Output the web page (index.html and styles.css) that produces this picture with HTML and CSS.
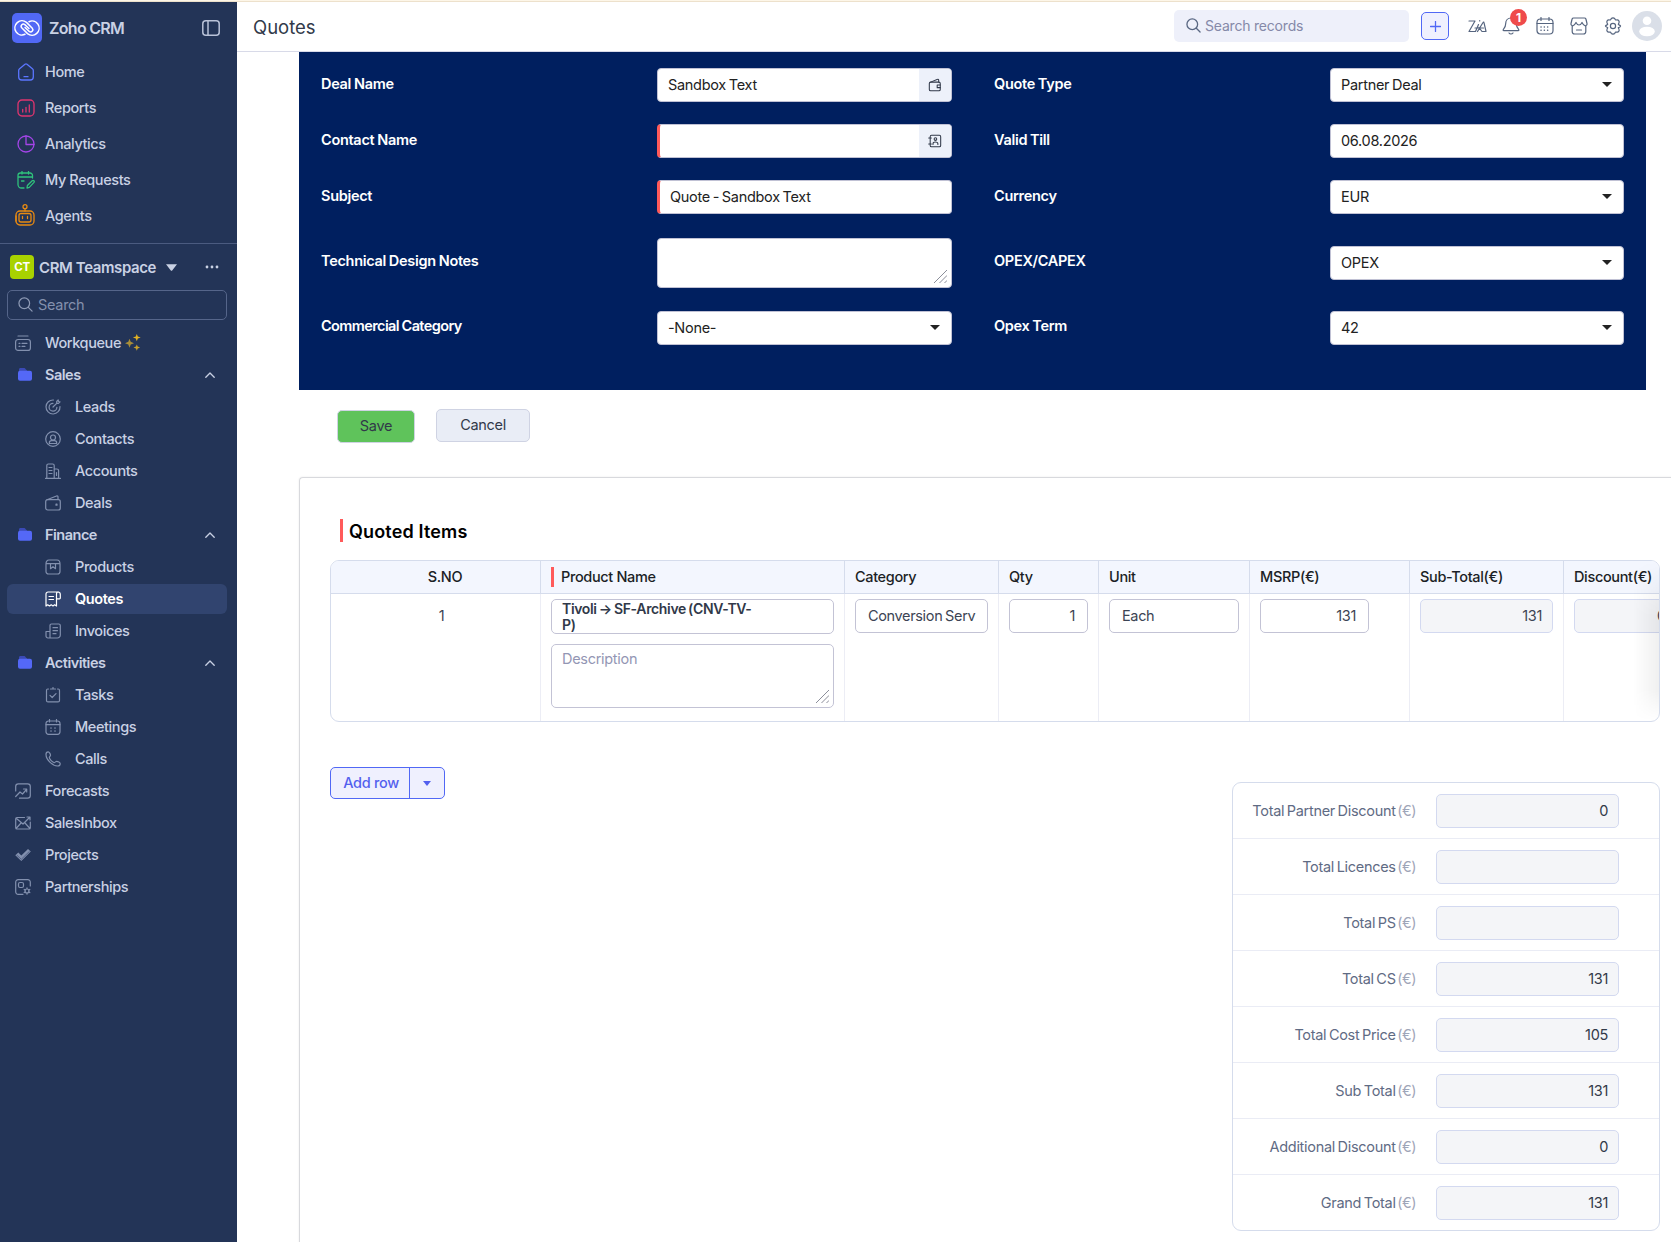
FILE: index.html
```html
<!DOCTYPE html>
<html lang="en">

<head>
    <meta charset="UTF-8">
    <meta name="viewport" content="width=device-width, initial-scale=1.0">
    <title>Quotes - Zoho CRM</title>
    <link rel="stylesheet" href="styles.css">
</head>

<body>
<div class="strip"></div>
<div class="app">
    <nav class="sidebar">
        <div class="brand">
            <svg class="logo" viewBox="0 0 30 30"><rect width="30" height="30" rx="5" fill="#5168f5"/><g fill="none" stroke="#fff" stroke-width="1.5" stroke-linecap="round"><path d="M13 21.300A7.100 7.100 0 1 1 14.500 9.400L20.300 15.300A2.200 2.200 0 0 1 17.200 18.400L13 14.500"/><path d="M17 8.700A7.100 7.100 0 1 1 15.500 20.600L9.700 14.700A2.200 2.200 0 0 1 12.800 11.600L17 15.500"/></g></svg>
            <span class="brand-name">Zoho CRM</span>
            <svg class="collapse" viewBox="0 0 18 16"><rect x=".8" y=".8" width="16.4" height="14.4" rx="3"/><path d="M6 1v14"/></svg>
        </div>
        <ul class="main-menu">
            <li><svg class="ic" viewBox="0 0 18 18" stroke="#5b76ff"><path d="M1.700 7.500c0-.8.3-1.300.9-1.800L8 1.300c.7-.5 1.300-.5 2 0l5.400 4.400c.6.5.9 1 .9 1.800V14a3 3 0 0 1-3 3H4.700a3 3 0 0 1-3-3zM7 13.700h4"/></svg>Home</li>
            <li><svg class="ic" viewBox="0 0 18 18" stroke="#e0356f"><rect x="1" y="1" width="16" height="16" rx="4"/><path d="M5.700 10.500v2.500M9 8.500V13M12.300 6v7"/></svg>Reports</li>
            <li><svg class="ic" viewBox="0 0 18 18" stroke="#a445e8"><circle cx="9" cy="9" r="8"/><path d="M9 1v8.500h8"/></svg>Analytics</li>
            <li><svg class="ic" viewBox="0 0 18 18" stroke="#2fc27c"><path d="M7 17H4.500A3.500 3.500 0 0 1 1 13.500V4.500A2.500 2.500 0 0 1 3.500 2H13a2.500 2.500 0 0 1 2.500 2.500V7M1 6h14.500M5 .5V3M11.500.5V3M4.500 10h2.500M10 17l.4-2.500 4.800-4.800c1.200-1 2.700.5 1.800 1.700l-4.700 5z"/></svg>My Requests</li>
            <li><svg class="ic ic-agent" viewBox="0 0 20 22" stroke="#e88a12"><circle cx="10" cy="2.700" r="2"/><path d="M10 4.700V7"/><rect x="1" y="7" width="18" height="14" rx="4"/><rect x="4" y="9.500" width="12" height="8.500" rx="2"/><path d="M1 12v5M7.500 12.500v2M12.500 12.500v2"/></svg>Agents</li>
        </ul>
        <div class="teamspace">
            <span class="team-badge">CT</span>
            <span class="team-name">CRM Teamspace</span>
            <svg class="team-caret" viewBox="0 0 10 6"><path d="M0 0h10L5.800 5.400a1 1 0 0 1-1.600 0z"/></svg>
            <svg class="dots" viewBox="0 0 14 4"><circle cx="2" cy="2" r="1.400"/><circle cx="7" cy="2" r="1.400"/><circle cx="12" cy="2" r="1.400"/></svg>
        </div>
        <div class="side-search">
            <svg viewBox="0 0 16 16"><circle cx="6.700" cy="6.700" r="5.700"/><path d="M11 11l4 4"/></svg>
            <span>Search</span>
        </div>
        <ul class="modules">
            <li><svg class="ic" viewBox="0 0 16 16"><rect x=".6" y="4.500" width="14.800" height="10.900" rx="2.500"/><path d="M3 1h10M4 8.300h1M4 11.300h1M7 8.300h5M7 11.300h3"/></svg>Workqueue
                <svg class="sparkle" viewBox="0 0 16 17"><path fill="#a98d38" d="M4.500 4.800l1.200 3 3.300 1.400-3.300 1.400-1.200 3.200-1.200-3.200L0 9.200l3.300-1.400z"/><path fill="#e3b223" d="M11.800 0l1 2.600 2.900 1-2.900 1-1 2.600-1-2.600-2.900-1 2.900-1z"/><path fill="#c7a02c" d="M11.800 10.500l.9 2.100 2.400.9-2.400.9-.9 2.400-.9-2.400-2.400-.9 2.400-.9z"/></svg></li>
            <li class="group"><svg class="folder" viewBox="0 0 14 13"><path fill="#3b4ab5" d="M1 4V1.500C1 .6 1.600 0 2.400 0H6c.8 0 1 .3 1.500.9L9 2.500V5z"/><rect y="2.700" width="14" height="10" rx="2" fill="#5468f7"/></svg>Sales<svg class="chev" viewBox="0 0 10 6"><path d="M.8 5.300L5 1l4.200 4.300"/></svg></li>
            <li class="child"><svg class="ic" viewBox="0 0 16 16"><path d="M8.500 1A7 7 0 1 0 15 7.500M8 4.300a3.900 3.900 0 1 0 3.900 4M8 8l3.700-3.700V2.500L13.200 1l.3 1.500 1.500.3-1.500 1.500h-1.800"/></svg>Leads</li>
            <li class="child"><svg class="ic" viewBox="0 0 16 16"><circle cx="8" cy="8" r="7.300"/><circle cx="8" cy="6.500" r="2.500"/><path d="M4.300 12.500v-.6c0-1.300 1-2.200 2.200-2.200h3c1.200 0 2.200.9 2.200 2.200v.6z"/></svg>Contacts</li>
            <li class="child"><svg class="ic" viewBox="0 0 16 16"><path d="M.5 15.300h15M1.800 15V2.500C1.800 1.600 2.500 1 3.300 1h4.400c.9 0 1.500.6 1.500 1.500V15M9.200 6h2.600c1 0 1.800.6 1.800 1.500V15M4 4.500h3M4 7.500h3M4 10.500h3M11.500 9.500v3"/></svg>Accounts</li>
            <li class="child"><svg class="ic" viewBox="0 0 16 16"><rect x=".7" y="4.700" width="14.600" height="10.300" rx="2"/><path d="M2 4.700L11.500 1c.8-.3 1.500.2 1.500 1v2.500M11 9.200h1v1h-1z"/></svg>Deals</li>
            <li class="group"><svg class="folder" viewBox="0 0 14 13"><path fill="#3b4ab5" d="M1 4V1.500C1 .6 1.600 0 2.400 0H6c.8 0 1 .3 1.500.9L9 2.500V5z"/><rect y="2.700" width="14" height="10" rx="2" fill="#5468f7"/></svg>Finance<svg class="chev" viewBox="0 0 10 6"><path d="M.8 5.300L5 1l4.200 4.300"/></svg></li>
            <li class="child"><svg class="ic" viewBox="0 0 16 16"><path d="M1 5c0-2.500 1-4 3-4h8c2 0 3 1.500 3 4v7.500a2.500 2.500 0 0 1-2.500 2.500h-9A2.500 2.500 0 0 1 1 12.500zM1 4.700h14M5.500 4.700v5L8 7.700l2.500 2v-5"/></svg>Products</li>
            <li class="child active"><svg class="ic" viewBox="0 0 16 16"><path d="M1 15V3a2 2 0 0 1 2-2h10c1.400 0 2.300 1 2.300 2.400V7c0 .5-.3.800-.8.8h-3M11.500 15V3c0-1.300.8-2 1.800-2M1 15l1.700-1.200L4.500 15l1.700-1.200L8 15l1.600-1.200L11.500 15M4 5.500h4.500M4 8.500h4.500"/></svg>Quotes</li>
            <li class="child"><svg class="ic" viewBox="0 0 16 16"><path d="M5 15V2.500C5 1.600 5.600 1 6.500 1h7.300c.9 0 1.500.6 1.500 1.500V12a3 3 0 0 1-3 3H3a2 2 0 0 1-2-2V8.500h4M8 4.700h4.500M8 7.700h4.500M8 10.700h3"/></svg>Invoices</li>
            <li class="group"><svg class="folder" viewBox="0 0 14 13"><path fill="#3b4ab5" d="M1 4V1.500C1 .6 1.600 0 2.400 0H6c.8 0 1 .3 1.500.9L9 2.500V5z"/><rect y="2.700" width="14" height="10" rx="2" fill="#5468f7"/></svg>Activities<svg class="chev" viewBox="0 0 10 6"><path d="M.8 5.300L5 1l4.200 4.300"/></svg></li>
            <li class="child"><svg class="ic" viewBox="0 0 16 16"><path d="M3.500 2h-.7C2 2 1.500 2.600 1.500 3.400v10c0 .9.600 1.500 1.500 1.500h10c.9 0 1.500-.6 1.500-1.500v-10c0-.8-.5-1.400-1.300-1.400h-.7M5.500 2h5M8 .5V2M5 8.300l2.200 2.200L11 6.700"/></svg>Tasks</li>
            <li class="child"><svg class="ic" viewBox="0 0 16 16"><rect x="1" y="2" width="14" height="13.300" rx="2.500"/><path d="M1 5.700h14M4.500.5V3M11.500.5V3M5.500 9h1M9.500 9h1M5.500 12h1M9.500 12h1"/></svg>Meetings</li>
            <li class="child"><svg class="ic" viewBox="0 0 16 16"><path d="M1 3.500C1 1.800 2 .8 3.200.8c1 0 2.300 2.500 2.300 3.500 0 .9-1.200 1.300-1.200 2.300 0 1.500 3.300 5 5 5 1 0 1.500-1.300 2.400-1.300 1 0 3.500 1.300 3.500 2.400 0 1.200-1 2.300-2.700 2.300C7.500 15 1 8.500 1 3.500z"/></svg>Calls</li>
            <li><svg class="ic" viewBox="0 0 16 16"><path d="M.7 8V3.500A2.700 2.700 0 0 1 3.400.8h9.200a2.700 2.700 0 0 1 2.700 2.700v9a2.700 2.700 0 0 1-2.700 2.700H4.500M.7 13.500L5 9l2.500 2 4-4.500M8.500 6h3.200v3"/></svg>Forecasts</li>
            <li><svg class="ic" viewBox="0 0 16 16"><path d="M9.500 2.500H2c-.8 0-1.300.5-1.300 1.200v9c0 .8.500 1.300 1.300 1.300h12c.8 0 1.300-.5 1.300-1.300V7M1.500 3.500L8 9l6-6M1.500 13l4.500-5M14.500 13L10 8M12 2h3v3"/></svg>SalesInbox</li>
            <li><svg class="ic solid" viewBox="0 0 16 16"><path d="M.3 8.200l3-2.700 3 3L13 2l2.800 2.500L6.300 14z"/><path class="cut" d="M2 8.300l4.300 4L14.300 4.500"/></svg>Projects</li>
            <li><svg class="ic" viewBox="0 0 16 16"><path d="M8 15.300H3.200A2.500 2.500 0 0 1 .7 12.800V3.200A2.500 2.500 0 0 1 3.200.7h9.600a2.500 2.500 0 0 1 2.500 2.500V7"/><rect x="3.500" y="3.500" width="5" height="5" rx="1.500"/><circle cx="12" cy="12" r="2"/><path d="M12 8.800v1M12 14v1.200M9.200 10.400l1 .6M13.800 13l1 .6M9.200 13.600l1-.6M13.800 11l1-.6"/></svg>Partnerships</li>
        </ul>
    </nav>

    <div class="page">
        <header class="topbar">
            <h1>Quotes</h1>
            <div class="search">
                <svg viewBox="0 0 16 16"><circle cx="6.700" cy="6.700" r="5.700"/><path d="M11 11l4 4"/></svg>
                <span>Search records</span>
            </div>
            <button class="plus"><svg viewBox="0 0 12 12"><path d="M6 .5v11M.5 6h11"/></svg></button>
            <svg class="tic zia" viewBox="0 0 19 14"><path d="M1 2h6L1 12.500h6.500L10.500 5.500M11.700 1.500v.4M7 9h8.500M9.500 12.500L15 3.500c.4-.7.9-.5 1 .2l2 8.800h-4L11 8.500"/></svg>
            <div class="bell">
                <svg class="tic" viewBox="0 0 18 18"><path d="M9 1C5.800 1 3.700 3.500 3.700 6.500c0 3.500-1 4.500-2.400 6-.4.500-.2 1.200.5 1.200h14.400c.7 0 .9-.7.5-1.200-1.400-1.500-2.400-2.500-2.400-6C14.300 3.500 12.200 1 9 1zM7 16c1 1.300 3 1.300 4 0"/></svg>
                <span class="count">1</span>
            </div>
            <svg class="tic cal" viewBox="0 0 18 18"><rect x="1" y="2" width="16" height="15" rx="3.500"/><path d="M1 6.500h16M5 .5v3M13 .5v3"/><path class="dotted" d="M5 10h8.500M5 13.300h8.500"/></svg>
            <svg class="tic shop" viewBox="0 0 18 18"><path d="M3.500 1h11c.7 0 1.200.4 1.400 1l1.100 4.500c.3 1.500-.8 2.300-1.800 2.300-1.400 0-2.200-1.300-3.200-3.300C11 7.500 10.300 8 9 8S7 7.500 6 5.500C5 7.500 4.200 8.800 2.800 8.800 1.800 8.800.7 8 1 6.500L2.100 2c.2-.6.700-1 1.400-1zM2.200 9v5.500A2.500 2.500 0 0 0 4.700 17h8.600a2.500 2.500 0 0 0 2.500-2.500V9M6.500 13h5"/></svg>
            <svg class="tic gear" viewBox="0 0 18 18"><path d="M7.300 1.600c.7-1 2.700-1 3.400 0l.9 1.400 1.700-.1c1.300 0 2.300 1.700 1.700 2.900L14.300 7.300c.7.800 1.700.9 2.300 1.700-.1 1.300-1.600 1.500-2.300 1.700l.7 1.500c.6 1.200-.4 2.900-1.700 2.900l-1.700-.1-.9 1.400c-.7 1-2.700 1-3.400 0L6.400 15l-1.700.1c-1.300 0-2.300-1.700-1.700-2.900l.7-1.500c-.7-.8-2.200-.9-2.300-1.700.6-.8 1.600-.9 2.300-1.700L3 5.800c-.6-1.200.4-2.900 1.700-2.900L6.400 3z"/><circle cx="9" cy="9" r="2.600"/></svg>
            <svg class="avatar" viewBox="0 0 30 30"><circle cx="15" cy="15" r="15" fill="#dadfe8"/><circle cx="15" cy="9.800" r="4.300" fill="#fff"/><ellipse cx="15" cy="20.500" rx="7.800" ry="4.800" fill="#fff"/></svg>
        </header>

        <main class="content">
            <section class="quote-form">
                <div class="form-row">
                    <label>Deal Name</label>
                    <div class="field">Sandbox Text<span class="addon"><svg viewBox="0 0 16 16"><rect x="1.500" y="4.700" width="12.500" height="9.800" rx="1.500"/><path d="M3 4.700L11 1.500c.7-.3 1.200.1 1.200.8v2.200M14 8h-3.500v3H14"/></svg></span></div>
                    <label class="second">Quote Type</label>
                    <div class="field">Partner Deal<i class="caret"></i></div>
                </div>
                <div class="form-row">
                    <label>Contact Name</label>
                    <div class="field required"><span class="addon"><svg viewBox="0 0 16 16"><rect x="2.500" y="1.500" width="12" height="13" rx="1.500"/><circle cx="8.500" cy="5.800" r="1.500"/><path d="M5.700 12v-1c0-2.600 5.600-2.600 5.600 0v1M.8 4.500h3M.8 11.500h3"/></svg></span></div>
                    <label class="second">Valid Till</label>
                    <div class="field">06.08.2026</div>
                </div>
                <div class="form-row">
                    <label>Subject</label>
                    <div class="field required">Quote - Sandbox Text</div>
                    <label class="second">Currency</label>
                    <div class="field">EUR<i class="caret"></i></div>
                </div>
                <div class="form-row tall">
                    <label>Technical Design Notes</label>
                    <div class="field area"><svg class="grip" viewBox="0 0 13 13"><path d="M0 13L13 0M5.500 13L13 5.500M10.500 13l2.500-2.500"/></svg></div>
                    <label class="second">OPEX/CAPEX</label>
                    <div class="field">OPEX<i class="caret"></i></div>
                </div>
                <div class="form-row last">
                    <label class="narrow">Commercial Category</label>
                    <div class="field">-None-<i class="caret"></i></div>
                    <label class="second">Opex Term</label>
                    <div class="field">42<i class="caret"></i></div>
                </div>
            </section>

            <div class="actions">
                <button class="save">Save</button>
                <button class="cancel">Cancel</button>
            </div>

            <section class="items-card">
                <h2>Quoted Items</h2>
                <div class="items">
                    <div class="items-grid head">
                        <div class="sno">S.NO</div>
                        <div class="must">Product Name</div>
                        <div>Category</div>
                        <div>Qty</div>
                        <div>Unit</div>
                        <div>MSRP(€)</div>
                        <div>Sub-Total(€)</div>
                        <div>Discount(€)</div>
                    </div>
                    <div class="items-grid line">
                        <div class="sno">1</div>
                        <div>
                            <div class="product"><span>Tivoli → SF-Archive (CNV-TV-<br>P)</span></div>
                            <div class="desc">Description<svg class="grip" viewBox="0 0 13 13"><path d="M0 13L13 0M5.500 13L13 5.500M10.500 13l2.500-2.500"/></svg></div>
                        </div>
                        <div><div class="cell">Conversion Serv</div></div>
                        <div><div class="cell num">1</div></div>
                        <div><div class="cell unit">Each</div></div>
                        <div><div class="cell num msrp">131</div></div>
                        <div><div class="cell num locked">131</div></div>
                        <div><div class="cell locked cut-off">0</div></div>
                    </div>
                    <div class="fade"></div>
                </div>

                <div class="bottom">
                    <div class="add-row"><span>Add row</span><i class="caret"></i></div>
                    <div class="totals">
                        <div class="total"><span>Total Partner Discount <em>(€)</em></span><b>0</b></div>
                        <div class="total"><span>Total Licences <em>(€)</em></span><b></b></div>
                        <div class="total"><span>Total PS <em>(€)</em></span><b></b></div>
                        <div class="total"><span>Total CS <em>(€)</em></span><b>131</b></div>
                        <div class="total"><span>Total Cost Price <em>(€)</em></span><b>105</b></div>
                        <div class="total"><span>Sub Total <em>(€)</em></span><b>131</b></div>
                        <div class="total"><span>Additional Discount <em>(€)</em></span><b>0</b></div>
                        <div class="total"><span>Grand Total <em>(€)</em></span><b>131</b></div>
                    </div>
                </div>
            </section>
        </main>
    </div>
</div>
</body>
</html>
```
FILE: styles.css
```css
* {
    box-sizing: border-box;
}

body {
    margin: 0;
    height: 1242px;
    overflow: hidden;
    background: #fff;
    color: #222;
    font-family: Inter, "Liberation Sans", sans-serif;
    font-size: 14.5px;
    letter-spacing: -0.3px;
}

ul {
    list-style: none;
    margin: 0;
    padding: 0;
}

svg {
    flex: none;
    fill: none;
    stroke-linecap: round;
    stroke-linejoin: round;
}

button {
    font: inherit;
    letter-spacing: inherit;
}

.strip {
    height: 2px;
    background: #fdf6e8;
    border-bottom: 1px solid #ede1cc;
}

.app {
    display: flex;
    height: 1240px;
}

/* sidebar */
.sidebar {
    width: 237px;
    flex: none;
    background: #233457;
    color: #c9d1e4;
    font-weight: 500;
    letter-spacing: -0.4px;
}

.brand {
    display: flex;
    align-items: center;
    height: 51px;
    padding: 0 17px 0 12px;
}

.logo {
    width: 30px;
    height: 30px;
}

.brand-name {
    margin-left: 7px;
    font-size: 16px;
    font-weight: 600;
    letter-spacing: -0.7px;
}

.collapse {
    width: 18px;
    height: 16px;
    margin-left: auto;
    stroke: #b9c2d8;
    stroke-width: 1.5;
}

.main-menu li {
    display: flex;
    align-items: center;
    height: 36px;
    padding-left: 17px;
}

.main-menu .ic {
    width: 18px;
    height: 18px;
    margin-right: 10px;
    position: relative;
    top: 1px;
    stroke-width: 1.3;
}

.main-menu .ic-agent {
    width: 20px;
    height: 22px;
    margin-left: -2px;
    top: 0;
}

.main-menu {
    height: 191px;
    border-bottom: 1px solid #4b5b80;
}

.teamspace {
    display: flex;
    align-items: center;
    height: 46px;
    padding: 0 18px 0 10px;
}

.team-badge {
    width: 24px;
    height: 24px;
    border-radius: 4px;
    background: #a8d200;
    color: #fff;
    font-size: 11.5px;
    font-weight: 700;
    line-height: 24px;
    text-align: center;
}

.team-name {
    margin-left: 5px;
    font-size: 15px;
    font-weight: 600;
    letter-spacing: -0.4px;
}

.team-caret {
    width: 11px;
    height: 7px;
    margin-left: 10px;
    fill: #c9d1e4;
}

.dots {
    width: 14px;
    height: 4px;
    margin-left: auto;
    fill: #c9d1e4;
}

.side-search {
    display: flex;
    align-items: center;
    height: 30px;
    margin: 0 10px 0 7px;
    padding: 0 0 1px 10px;
    border: 1px solid #55658a;
    border-radius: 5px;
    color: #8390ad;
    font-weight: 400;
    letter-spacing: -0.3px;
}

.side-search svg {
    width: 15px;
    height: 15px;
    margin-right: 5px;
    stroke: #8e9ab5;
    stroke-width: 1.3;
}

.modules {
    padding-top: 8px;
}

.modules li {
    display: flex;
    align-items: center;
    height: 30px;
    margin: 0 10px 2px 7px;
    padding: 0 0 1px 8px;
    border-radius: 6px;
}

.modules .ic {
    width: 16px;
    height: 16px;
    margin-right: 14px;
    stroke: #8290ae;
    stroke-width: 1.2;
}

.modules .sparkle {
    width: 16px;
    height: 17px;
    margin-left: 4px;
}

.modules .group {
    padding-left: 11px;
    font-weight: 600;
    letter-spacing: -0.5px;
}

.folder {
    width: 14px;
    height: 13px;
    margin-right: 13px;
}

.chev {
    width: 10px;
    height: 6px;
    margin-left: auto;
    margin-right: 12px;
    stroke: #c9d1e4;
    stroke-width: 1.3;
}

.modules .child {
    padding-left: 38px;
}

.modules .active {
    background: #31446f;
    color: #fff;
    font-weight: 600;
}

.modules .active .ic {
    stroke: #fff;
}

.modules .solid {
    fill: #8290ae;
    stroke: none;
}

.solid .cut {
    fill: none;
    stroke: #46567c;
    stroke-width: .8;
}

/* header */
.page {
    flex: 1;
    min-width: 0;
}

.topbar {
    display: flex;
    align-items: center;
    height: 50px;
    padding: 0 9px 1px 16px;
    border-bottom: 1px solid #d8dae8;
}

.topbar h1 {
    margin: 0;
    padding-top: 1px;
    font-size: 18.5px;
    font-weight: 400;
    letter-spacing: 0;
    color: #313949;
}

.search {
    display: flex;
    align-items: center;
    width: 235px;
    height: 32px;
    margin-left: auto;
    padding: 0 12px 1px;
    border-radius: 5px;
    background: #eef0fa;
    color: #8589a8;
    font-size: 14px;
    letter-spacing: -0.2px;
}

.search svg {
    width: 15px;
    height: 15px;
    margin-right: 4px;
    stroke: #5a6883;
    stroke-width: 1.4;
}

.plus {
    display: flex;
    align-items: center;
    justify-content: center;
    width: 28px;
    height: 28px;
    margin: 0 19px 0 12px;
    padding: 0;
    border: 1px solid #5168f5;
    border-radius: 5px;
    background: #eff0fe;
}

.plus svg {
    width: 11px;
    height: 11px;
    stroke: #5168f5;
    stroke-width: 1.4;
}

.tic {
    width: 18px;
    height: 18px;
    stroke: #56657f;
    stroke-width: 1.2;
}

.zia {
    width: 19px;
    height: 14px;
    margin-right: 15px;
}

.bell {
    position: relative;
    height: 18px;
    margin-right: 16px;
}

.count {
    position: absolute;
    left: 8px;
    top: -8px;
    width: 17px;
    height: 17px;
    border-radius: 50%;
    background: #ef4b4b;
    color: #fff;
    font-size: 12px;
    font-weight: 700;
    line-height: 17px;
    text-align: center;
}

.cal,
.shop {
    margin-right: 16px;
}

.dotted {
    stroke-dasharray: .1 3.2;
    stroke-width: 1.5;
}

.gear {
    margin-right: 10px;
}

.avatar {
    width: 30px;
    height: 30px;
}

/* form */
.content {
    padding-left: 62px;
}

.quote-form {
    width: 1347px;
    height: 338px;
    padding: 5px 22px 0;
    background: #001f5f;
}

.form-row {
    display: grid;
    grid-template-columns: 336px 295px 378px 294px;
    align-items: center;
    height: 56px;
}

.form-row.tall {
    height: 76px;
}

.form-row.last {
    height: 54px;
}

.form-row label {
    color: #fff;
    font-weight: 600;
    letter-spacing: -0.3px;
    word-spacing: -0.5px;
    padding-bottom: 3px;
}

.form-row.tall label,
.form-row.last label {
    padding-bottom: 5px;
}

.form-row .narrow {
    letter-spacing: -0.6px;
}

.form-row .second {
    padding-left: 42px;
}

.field {
    position: relative;
    display: flex;
    align-items: center;
    height: 34px;
    padding: 0 0 2px 10px;
    border: 1px solid #c0c1d4;
    border-radius: 4px;
    background: #fff;
    word-spacing: -1px;
    overflow: hidden;
}

.field.required {
    border-left: 3px solid #ff5a5a;
}

.field.area {
    height: 50px;
}

.addon {
    display: flex;
    align-items: center;
    justify-content: center;
    width: 32px;
    height: 34px;
    margin: 1px 0 0 auto;
    background: #edf1fa;
}

.addon svg {
    width: 14px;
    height: 14px;
    stroke: #313949;
    stroke-width: 1.2;
}

.caret {
    width: 0;
    margin-left: auto;
    margin-right: 11px;
    border: 5px solid transparent;
    border-top-color: #222;
    border-bottom-width: 0;
}

.grip {
    position: absolute;
    right: 4px;
    bottom: 4px;
    width: 13px;
    height: 13px;
    stroke: #8a8d99;
    stroke-width: 1;
}

.actions {
    display: flex;
    align-items: flex-start;
    gap: 21px;
    height: 87px;
    padding: 19px 0 0 38px;
}

.actions button {
    height: 33px;
    padding: 0 0 2px;
    border: 1px solid #cfd3e3;
    border-radius: 5px;
    color: #313949;
}

.actions .save {
    width: 78px;
    margin-top: 1px;
    background: #5fc35b;
}

.actions .cancel {
    width: 94px;
    background: #e9edf6;
}

/* quoted items */
.items-card {
    height: 800px;
    padding: 41px 11px 0 30px;
    border: 1px solid #d8d9dd;
    border-right: 0;
    border-radius: 4px 0 0 0;
    box-shadow: 0 0 2px rgba(0, 0, 0, .1);
}

.items-card h2 {
    height: 23px;
    margin: 0 0 18px 10px;
    padding-left: 6px;
    border-left: 3px solid #ff5a5a;
    color: #000;
    font-size: 18px;
    font-weight: 600;
    line-height: 26px;
    letter-spacing: 0.15px;
}

.items {
    position: relative;
    height: 162px;
    border: 1px solid #d5dcec;
    border-radius: 9px;
    overflow: hidden;
}

.items-grid {
    display: grid;
    grid-template-columns: 210px 304px 154px 100px 151px 160px 154px 154px;
}

.items-grid > div {
    padding-left: 10px;
    border-right: 1px solid #ecedf5;
}

.items-grid.head {
    height: 33px;
    border-bottom: 1px solid #d5dcec;
    background: #f3f6fe;
    color: #1c1f26;
    font-weight: 500;
    line-height: 32px;
    letter-spacing: -0.35px;
}

.items-grid.head > div {
    border-color: #d5dcec;
}

.items-grid .sno {
    padding-left: 19px;
    text-align: center;
}

.must::before {
    content: "";
    display: inline-block;
    width: 3px;
    height: 20px;
    margin: -2px 7px 0 0;
    background: #ff5a5a;
    vertical-align: middle;
}

.line {
    height: 128px;
    color: #3c4454;
}

.line > div {
    padding-top: 5px;
}

.line .sno {
    padding: 13px 0 0 12px;
}

.cell {
    width: 133px;
    height: 34px;
    padding: 0 12px;
    border: 1px solid #c3c3d5;
    border-radius: 5px;
    line-height: 32px;
    letter-spacing: -0.35px;
    word-spacing: -1px;
    white-space: nowrap;
    overflow: hidden;
}

.num {
    width: 79px;
    text-align: right;
}

.unit {
    width: 130px;
}

.msrp {
    width: 109px;
}

.locked {
    width: 133px;
    padding: 0 10px;
    border-color: #d3d9f0;
    background: #f4f5f8;
}

/* scrolled under the right edge of the table */
.cut-off {
    padding-left: 82px;
}

.product,
.desc {
    position: relative;
    width: 283px;
    border: 1px solid #c3c3d5;
    border-radius: 5px;
    padding-left: 10px;
}

.product {
    height: 35px;
    color: #313949;
    font-weight: 600;
    font-size: 14px;
    line-height: 16px;
    padding-top: 1px;
    letter-spacing: -0.35px;
    word-spacing: -1px;
}

.desc {
    height: 64px;
    margin-top: 10px;
    padding-top: 5px;
    color: #9396b4;
}

.fade {
    position: absolute;
    right: 0;
    top: 0;
    width: 26px;
    height: 160px;
    background: linear-gradient(to left, rgba(0, 0, 0, .06), rgba(0, 0, 0, 0));
    mask-image: linear-gradient(transparent, #000 35%, #000 80%, transparent);
}

.bottom {
    display: flex;
    justify-content: space-between;
    padding-top: 45px;
}

.add-row {
    display: flex;
    align-items: center;
    width: 115px;
    height: 32px;
    border: 1px solid #5168f5;
    border-radius: 5px;
    background: #eff0fe;
    color: #5360ee;
    font-weight: 500;
}

.add-row span {
    width: 79px;
    height: 30px;
    padding-left: 2px;
    border-right: 1px solid #5168f5;
    line-height: 29px;
    text-align: center;
}

.add-row .caret {
    margin-right: 13px;
    border-width: 5px 4px 0;
    border-top-color: #5360ee;
}

.totals {
    width: 428px;
    height: 449px;
    margin-top: 15px;
    border: 1px solid #d5dcec;
    border-radius: 9px;
}

.total {
    display: flex;
    align-items: center;
    justify-content: flex-end;
    height: 56px;
    padding-right: 40px;
    border-bottom: 1px solid #eaecf5;
    color: #5f6b84;
    word-spacing: -1.2px;
}

.total:last-child {
    height: 55px;
    border-bottom: 0;
}

.total em {
    margin-left: -1px;
    color: #9fa5b8;
    font-style: normal;
    letter-spacing: -0.5px;
}

.total b {
    width: 183px;
    height: 34px;
    margin-left: 20px;
    padding-right: 10px;
    border: 1px solid #d3d9f0;
    border-radius: 5px;
    background: #f4f5f8;
    color: #313949;
    font-weight: 400;
    line-height: 32px;
    text-align: right;
}
```
